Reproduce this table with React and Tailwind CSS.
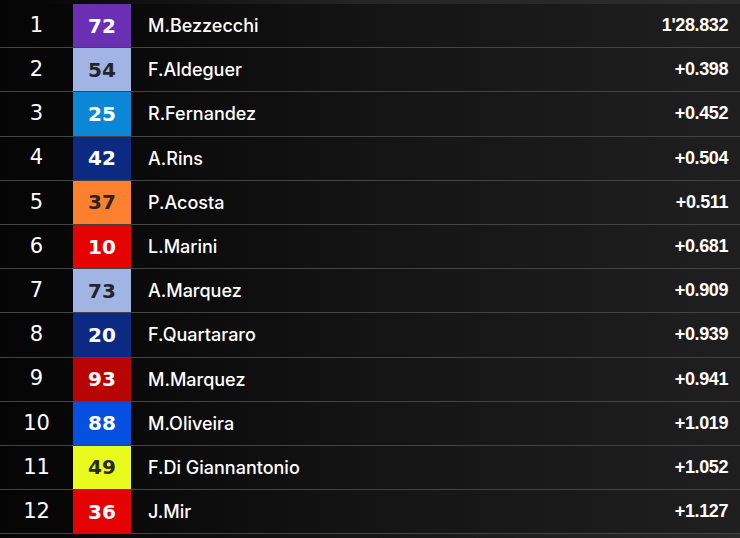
import React from 'react';

const riders = [
  { pos: 1, num: '72', name: 'M.Bezzecchi', time: "1'28.832", bg: 'bg-[#6a2fb2]', fg: 'text-white' },
  { pos: 2, num: '54', name: 'F.Aldeguer', time: '+0.398', bg: 'bg-[#a2b4e4]', fg: 'text-[#23252b]' },
  { pos: 3, num: '25', name: 'R.Fernandez', time: '+0.452', bg: 'bg-[#0b87d6]', fg: 'text-white' },
  { pos: 4, num: '42', name: 'A.Rins', time: '+0.504', bg: 'bg-[#0c2a82]', fg: 'text-white' },
  { pos: 5, num: '37', name: 'P.Acosta', time: '+0.511', bg: 'bg-[#fd8030]', fg: 'text-[#2a2320]' },
  { pos: 6, num: '10', name: 'L.Marini', time: '+0.681', bg: 'bg-[#e50202]', fg: 'text-white' },
  { pos: 7, num: '73', name: 'A.Marquez', time: '+0.909', bg: 'bg-[#a2b4e4]', fg: 'text-[#23252b]' },
  { pos: 8, num: '20', name: 'F.Quartararo', time: '+0.939', bg: 'bg-[#0c2a82]', fg: 'text-white' },
  { pos: 9, num: '93', name: 'M.Marquez', time: '+0.941', bg: 'bg-[#b80404]', fg: 'text-white' },
  { pos: 10, num: '88', name: 'M.Oliveira', time: '+1.019', bg: 'bg-[#0550e0]', fg: 'text-white' },
  { pos: 11, num: '49', name: 'F.Di Giannantonio', time: '+1.052', bg: 'bg-[#e9fb1c]', fg: 'text-[#2a2a20]' },
  { pos: 12, num: '36', name: 'J.Mir', time: '+1.127', bg: 'bg-[#e50202]', fg: 'text-white' },
];

const Row = ({ rider }) => (
  <div className="flex h-[44.2px] items-stretch border-b border-[#444] bg-gradient-to-r from-[#050505] via-[#141414] to-[#1f1f1f]">
    <div className="flex w-[73px] items-center justify-center font-['DejaVu_Sans',sans-serif] text-[21px] font-normal text-white">
      {rider.pos}
    </div>
    <div
      className={`flex w-[58px] items-center justify-center font-['DejaVu_Sans',sans-serif] text-[20px] font-bold ${rider.bg} ${rider.fg}`}
    >
      {rider.num}
    </div>
    <div className="flex flex-1 items-center pl-[17px] font-['Inter',sans-serif] text-[18px] font-medium text-white">
      {rider.name}
    </div>
    <div className="flex items-center pr-[12px] font-['Liberation_Sans',sans-serif] text-[18px] font-bold tracking-[-0.4px] text-white">
      {rider.time}
    </div>
  </div>
);

const App = () => {
  return (
    <div className="h-[538px] w-[740px] overflow-hidden bg-gradient-to-r from-[#050505] to-[#2a2a2a]">
      <div className="h-[4px] bg-gradient-to-r from-[#050505] via-[#262626] to-[#2c2c2c]"></div>
      <div className="flex flex-col">
        {riders.map((r) => (
          <Row key={r.pos} rider={r} />
        ))}
      </div>
    </div>
  );
};

export default App;
